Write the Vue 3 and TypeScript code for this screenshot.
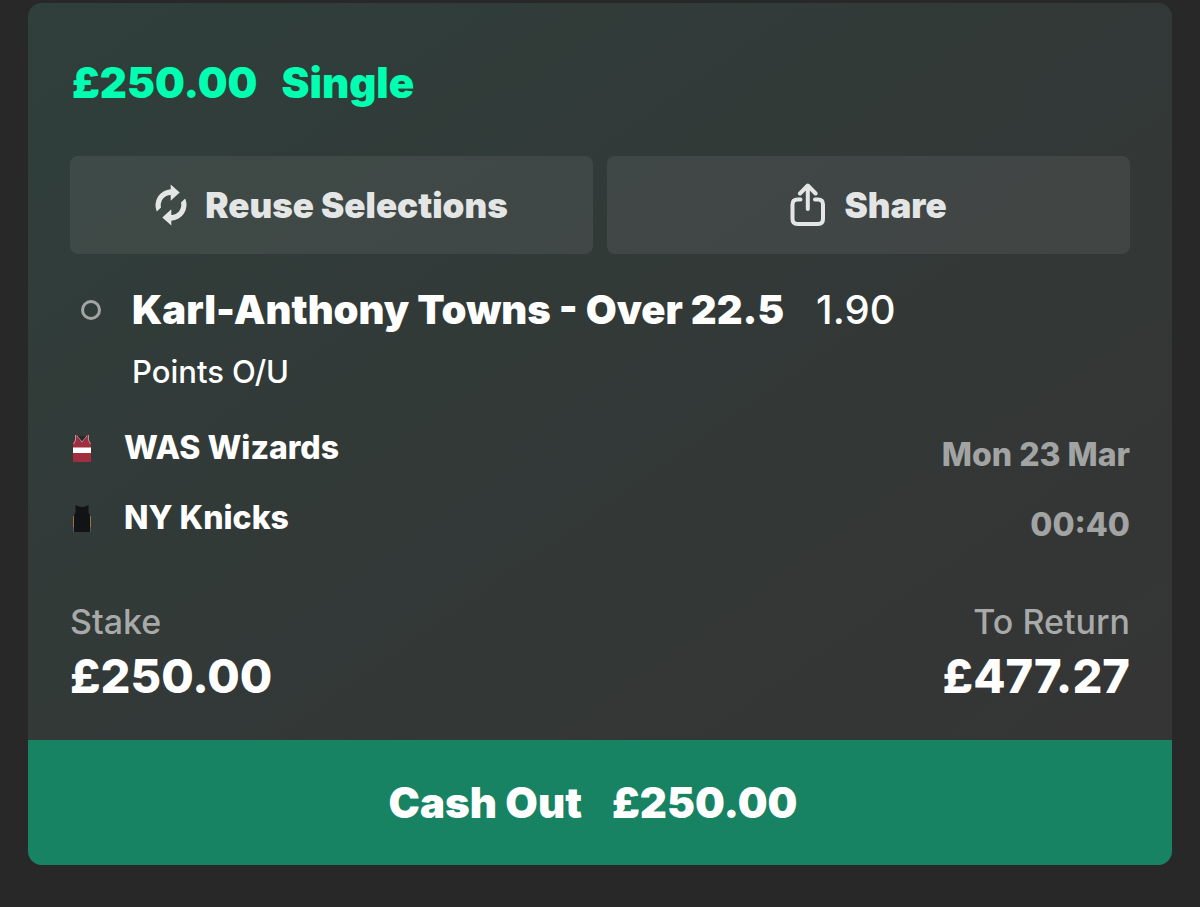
<script setup lang="ts">
interface Team {
  name: string
  kit: 'wizards' | 'knicks'
}

const stake = '£250.00'
const teams: Team[] = [
  { name: 'WAS Wizards', kit: 'wizards' },
  { name: 'NY Knicks', kit: 'knicks' },
]
</script>

<template>
  <main class="page">
    <article class="slip">
      <div class="body">
        <h1 class="title">
          <span>{{ stake }}</span>
          <span>Single</span>
        </h1>

        <div class="actions">
          <button type="button" class="action">
            <svg class="icon-reuse" viewBox="0 0 32 42" aria-hidden="true">
              <path d="M1.800 27.500A16 16 0 0 1 15.700 5.200V.4L24.700 8.500L15.700 16.700V10.900A10.200 10.200 0 0 0 6 23.400Z" />
              <path d="M30.200 14.500A16 16 0 0 1 16.300 36.800V41.600L7.300 33.500L16.300 25.300V31.100A10.200 10.200 0 0 0 26 18.600Z" />
            </svg>
            <span>Reuse Selections</span>
          </button>
          <button type="button" class="action">
            <svg class="icon-share" viewBox="0 0 36 44" aria-hidden="true">
              <path d="M10.500 16.500H7.500Q2.500 16.500 2.500 21.500V36Q2.500 41 7.500 41H28Q33 41 33 36V21.500Q33 16.500 28 16.500H25" />
              <path d="M17.800 26V3M10 10.500L17.800 2.500L25.600 10.500" />
            </svg>
            <span>Share</span>
          </button>
        </div>

        <section class="selection">
          <span class="marker"></span>
          <h2 class="pick">
            <span>Karl-Anthony Towns - Over 22.5</span>
            <span class="odds">1.90</span>
          </h2>
          <p class="market">Points O/U</p>
        </section>

        <section class="fixture">
          <ul class="teams">
            <li v-for="team in teams" :key="team.name">
              <svg v-if="team.kit === 'wizards'" class="kit" viewBox="0 0 20 30" aria-hidden="true">
                <path d="M3.500 2H5.500L10 7L14.500 2H16.500L17 8L19 11V29H1V11L3 8Z" fill="#a12e3e" />
                <path d="M5.500 3H14.500L13 7L10 9L7 7Z" fill="#252a2c" />
                <path d="M3.500 2V7L1.500 11M16.500 2V7L18.500 11M5 3L10 9L15 3" fill="none" stroke="#c08f9b" />
                <path d="M1 14.500H19V20H1Z" fill="#fff" />
              </svg>
              <svg v-else class="kit" viewBox="0 0 20 30" aria-hidden="true">
                <path d="M3.500 2Q10 6 16.500 2V9L18 13V29H2V13L3.500 9Z" fill="#121314" />
                <path d="M1.500 13V24M18.500 13V24" stroke="#a0713c" />
                <path d="M1.500 24V29M18.500 24V29" stroke="#4a566c" />
              </svg>
              <span>{{ team.name }}</span>
            </li>
          </ul>
          <div class="kickoff">
            <span>Mon 23 Mar</span>
            <span>00:40</span>
          </div>
        </section>

        <dl class="totals">
          <div>
            <dt>Stake</dt>
            <dd>{{ stake }}</dd>
          </div>
          <div class="return">
            <dt>To Return</dt>
            <dd>£477.27</dd>
          </div>
        </dl>
      </div>

      <button type="button" class="cash-out">
        <span>Cash Out</span>
        <span>{{ stake }}</span>
      </button>
    </article>
  </main>
</template>

<style>
body {
  margin: 0;
  background: #282828;
}
</style>

<style scoped>
.page {
  padding: 3px 28px 42px;
  font-family: Inter, "Liberation Sans", sans-serif;
  color: #fff;
}

.slip {
  border-radius: 14px;
  overflow: hidden;
  background: linear-gradient(145deg, #2f3f3b 0%, #323a38 38%, #333736 65%, #353535 90%);
}

.body {
  padding: 50px 42px 34px;
}

h1,
h2,
p,
ul,
dl,
dd {
  margin: 0;
  padding: 0;
}

.title {
  display: flex;
  gap: 24px;
  padding-left: 2px;
  font-size: 42px;
  line-height: 60px;
  font-weight: 900;
  color: #00ffb0;
}

.actions {
  display: grid;
  grid-template-columns: 1fr 1fr;
  gap: 14px;
  margin-top: 43px;
}

button {
  border: 0;
  font-family: inherit;
  cursor: pointer;
}

.action {
  display: flex;
  align-items: center;
  justify-content: center;
  gap: 18px;
  height: 98px;
  padding: 0;
  border-radius: 8px;
  background: rgba(255, 255, 255, 0.07);
  color: #e4e6e5;
  font-size: 35px;
  font-weight: 900;
}

.icon-reuse {
  width: 32px;
  height: 42px;
  fill: currentColor;
}

.icon-share {
  width: 36px;
  height: 44px;
  fill: none;
  stroke: currentColor;
  stroke-width: 4;
  stroke-linecap: round;
  stroke-linejoin: round;
}

.selection {
  display: grid;
  grid-template-columns: 62px 1fr;
  align-items: center;
  row-gap: 10px;
  margin-top: 26px;
}

.marker {
  box-sizing: border-box;
  width: 20px;
  height: 20px;
  margin-left: 11px;
  border: 3px solid #a3a6a5;
  border-radius: 50%;
}

.pick {
  display: flex;
  gap: 32px;
  font-size: 40px;
  line-height: 60px;
  font-weight: 900;
}

.odds {
  font-weight: 500;
}

.market {
  grid-column: 2;
  font-size: 31px;
  line-height: 44px;
  font-weight: 500;
}

.fixture {
  display: flex;
  justify-content: space-between;
  margin-top: 19px;
  font-size: 32px;
  line-height: 70px;
  font-weight: 800;
}

.teams {
  list-style: none;
}

.teams li {
  display: flex;
  align-items: center;
  gap: 32px;
  padding-left: 2px;
}

.kit {
  width: 20px;
  height: 30px;
}

.kickoff {
  display: flex;
  flex-direction: column;
  margin-top: 7px;
  text-align: right;
  color: #a2a3a3;
}

.totals {
  display: flex;
  justify-content: space-between;
  margin-top: 40px;
}

.return {
  text-align: right;
}

dt {
  font-size: 34px;
  line-height: 44px;
  font-weight: 500;
  color: #a8a9a9;
}

dd {
  margin-top: 2px;
  font-size: 47px;
  line-height: 60px;
  font-weight: 800;
}

.cash-out {
  display: flex;
  align-items: center;
  justify-content: center;
  gap: 30px;
  width: 100%;
  height: 125px;
  padding: 0 14px 0 0;
  background: #178362;
  color: #fff;
  font-size: 42px;
  font-weight: 900;
}
</style>
